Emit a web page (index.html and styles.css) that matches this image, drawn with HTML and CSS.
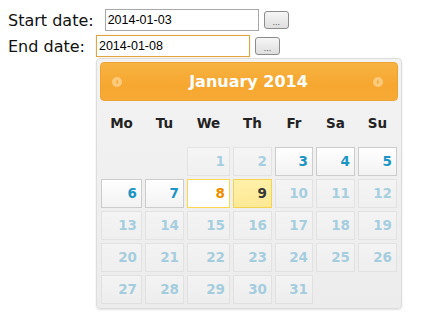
FILE: index.html
```html
<!DOCTYPE html>
<html lang="en">
<head>
  <meta charset="UTF-8" />
  <meta name="viewport" content="width=device-width, initial-scale=1.0" />
  <title>Date range</title>
  <link rel="stylesheet" href="styles.css">
</head>
<body>
  <div class="form">
    <div class="row">
      <label class="label" for="start">Start date:</label>
      <input class="field" id="start" type="text" value="2014-01-03">
      <button class="pick">...</button>
    </div>
    <div class="row">
      <label class="label" for="end">End date:</label>
      <input class="field focused" id="end" type="text" value="2014-01-08">
      <button class="pick">...</button>
    </div>
  </div>

  <div class="datepicker">
    <div class="dp-header">
      <svg class="dp-nav" width="10" height="10" viewBox="0 0 10 10">
        <circle cx="5" cy="5" r="5" fill="#fcca7c"/>
        <polygon points="6,2.5 3.5,5 6,7.5" fill="#f6ac3a"/>
      </svg>
      <span class="dp-title">January 2014</span>
      <svg class="dp-nav" width="10" height="10" viewBox="0 0 10 10">
        <circle cx="5" cy="5" r="5" fill="#fcca7c"/>
        <polygon points="4,2.5 6.5,5 4,7.5" fill="#f6ac3a"/>
      </svg>
    </div>

    <div class="dp-grid" id="grid">
      <div class="dp-dow">Mo</div>
      <div class="dp-dow">Tu</div>
      <div class="dp-dow">We</div>
      <div class="dp-dow">Th</div>
      <div class="dp-dow">Fr</div>
      <div class="dp-dow">Sa</div>
      <div class="dp-dow">Su</div>
    </div>
  </div>

  <script>
    const grid = document.getElementById("grid");
    const enabled = [3, 4, 5, 6, 7];

    // 1 Jan 2014 is a Wednesday
    for (let i = 0; i < 2; i++) {
      const empty = document.createElement("div");
      grid.appendChild(empty);
    }

    for (let d = 1; d <= 31; d++) {
      const cell = document.createElement("div");
      cell.className = "dp-day";
      if (d === 8) cell.classList.add("active");
      else if (d === 9) cell.classList.add("highlight");
      else if (!enabled.includes(d)) cell.classList.add("disabled");
      cell.textContent = d;
      grid.appendChild(cell);
    }
  </script>
</body>
</html>
```

FILE: styles.css
```css
* {
  box-sizing: border-box;
}

body {
  margin: 8px;
  font-family: "DejaVu Sans", Verdana, sans-serif;
  font-size: 16px;
  color: #111;
  background: #fff;
}

.form {
  display: flex;
  flex-direction: column;
  gap: 2px;
}

.row {
  display: flex;
  align-items: center;
  height: 24px;
}

.label {
  margin-right: 11px;
}

.field {
  width: 154px;
  height: 22px;
  border: 1px solid #a9a9a9;
  padding: 1px 2px;
  font-family: "Liberation Sans", Arial, sans-serif;
  font-size: 12.5px;
  color: #000;
  outline: none;
}

.field.focused {
  border-color: #e3a444;
  box-shadow: 0 0 1px #f3c77e;
}

.pick {
  margin-left: 5px;
  width: 25px;
  height: 18px;
  padding: 4px 0 0;
  border: 1px solid #8c8c8c;
  border-radius: 3px;
  background: linear-gradient(#f6f6f6, #dedede);
  font-family: "Liberation Sans", Arial, sans-serif;
  font-size: 9px;
  color: #555;
  line-height: 10px;
}

.datepicker {
  position: absolute;
  left: 96px;
  top: 58px;
  width: 306px;
  padding: 3px 3px 4px;
  border: 1px solid #dddddd;
  border-radius: 4px;
  background: linear-gradient(#f3f3f3, #ececec);
  box-shadow: 0 1px 2px rgba(0, 0, 0, 0.12);
}

.dp-header {
  display: flex;
  align-items: center;
  justify-content: space-between;
  height: 39px;
  padding: 0 14px 0 11px;
  border: 1px solid #eea335;
  border-radius: 4px;
  background: linear-gradient(#f8b342, #f6a730 60%, #f7aa36);
}

.dp-title {
  color: #fff;
  font-weight: bold;
  font-size: 16px;
  margin-left: 2px;
}

.dp-grid {
  display: grid;
  grid-template-columns: 41px 39px 43px 39px 38px 39px 39px;
  grid-auto-rows: 29px;
  grid-template-rows: 43px;
  column-gap: 3px;
  row-gap: 3px;
  margin: 0 1px;
}

.dp-dow {
  display: flex;
  align-items: center;
  justify-content: center;
  font-weight: bold;
  font-size: 13.5px;
  color: #222;
}

.dp-day {
  border: 1px solid #cccccc;
  background: linear-gradient(#ffffff, #f2f2f2);
  color: #1c94c4;
  font-weight: bold;
  font-size: 13.5px;
  line-height: 27px;
  text-align: right;
  padding-right: 4px;
}

.dp-day.disabled {
  opacity: 0.35;
}

.dp-day.active {
  border-color: #fbd850;
  background: #ffffff;
  color: #eb8f00;
}

.dp-day.highlight {
  border-color: #f6d452;
  background: linear-gradient(#fff1a8, #fde995);
  color: #363636;
}
```
